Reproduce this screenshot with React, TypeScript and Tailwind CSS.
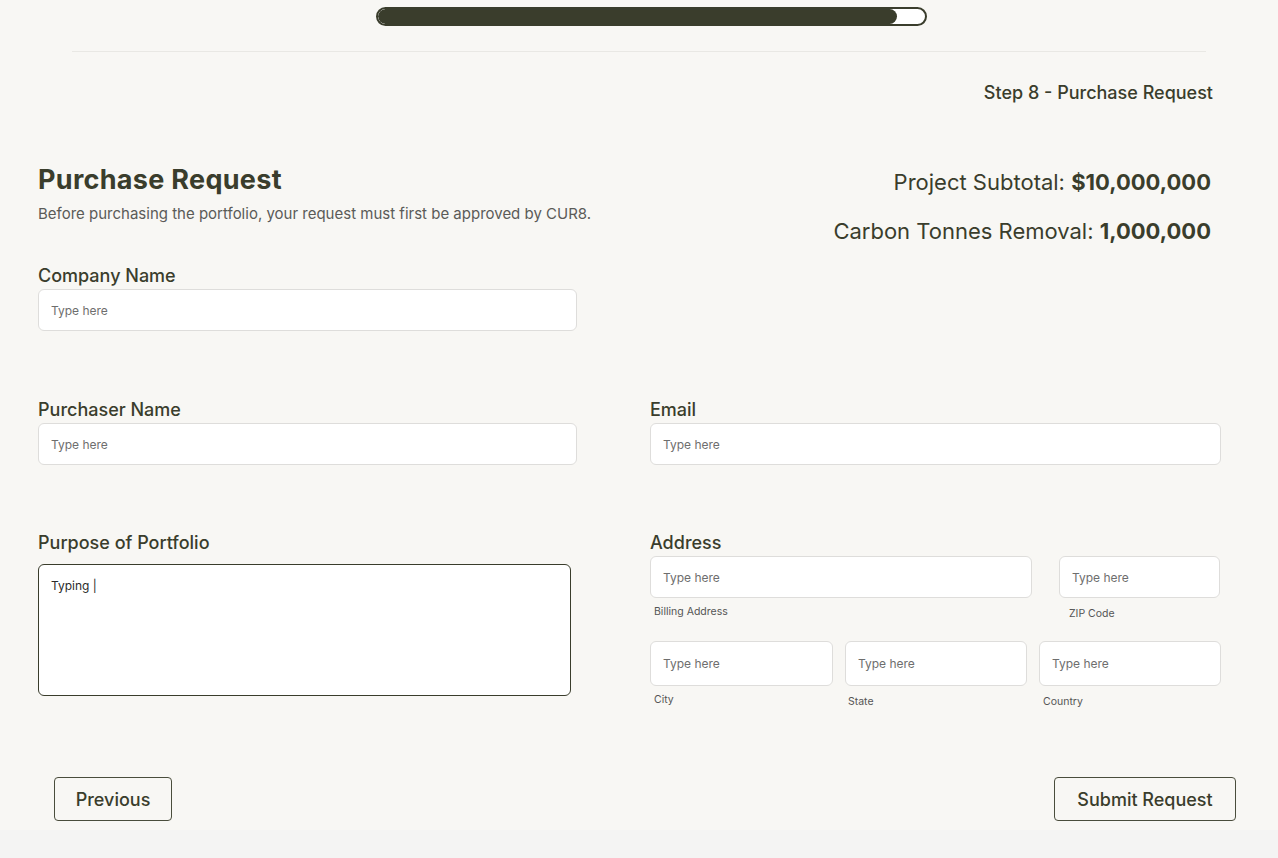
const ink = 'text-[#3a3d2c]';

function Field({ label, className = '' }: { label: string; className?: string }) {
  return (
    <div className={className}>
      <label className={`block text-[18px] font-medium leading-5 ${ink}`}>{label}</label>
      <input
        placeholder="Type here"
        className="mt-[3px] block h-[42px] w-full rounded-[6px] border border-[#dedddb] bg-white px-3 text-[12px] text-[#3a3d2c] placeholder:text-[#6e6e6e] outline-none"
      />
    </div>
  );
}

function SubInput({ caption, className = '', captionClass = '' }: { caption: string; className?: string; captionClass?: string }) {
  return (
    <div className={className}>
      <input
        placeholder="Type here"
        className="block h-full w-full rounded-[6px] border border-[#dedddb] bg-white px-3 text-[12px] placeholder:text-[#6e6e6e] outline-none"
      />
      <div className={`text-[10.5px] leading-4 text-[#555] ${captionClass}`}>{caption}</div>
    </div>
  );
}

export default function App() {
  return (
    <div className="min-h-screen bg-[#f4f4f3]" style={{ fontFamily: 'Inter, "Noto Sans", sans-serif' }}>
      <main className="h-[830px] bg-[#f8f7f4] pt-[7px]">
        {/* progress */}
        <div className="ml-[376px] h-[19px] w-[551px] overflow-hidden rounded-full border-2 border-[#3a3d2c] bg-white">
          <div className="h-full w-[519px] rounded-full bg-[#3a3d2c]" />
        </div>
        <div className="mx-[72px] mt-[25px] border-t border-[#e9e8e4]" />

        <div className={`mt-[29px] pr-[65px] text-right text-[18px] font-medium leading-6 ${ink}`}>
          Step 8 - Purchase Request
        </div>

        {/* header */}
        <div className="mt-[59px] flex items-start justify-between pl-[38px] pr-[67px]">
          <div>
            <h1 className={`text-[27px] font-bold leading-8 tracking-[0.3px] ${ink}`}>Purchase Request</h1>
            <p className="mt-[8px] text-[15px] leading-5 text-[#5b5b58]">
              Before purchasing the portfolio, your request must first be approved by CUR8.
            </p>
          </div>
          <div className={`mt-[4px] text-right text-[22px] leading-7 ${ink}`}>
            <div>
              Project Subtotal: <span className="font-bold">$10,000,000</span>
            </div>
            <div className="mt-[21px]">
              Carbon Tonnes Removal: <span className="font-bold">1,000,000</span>
            </div>
          </div>
        </div>

        {/* form */}
        <div className="mt-[21px] grid grid-cols-[539px_571px] gap-x-[73px] pl-[38px]">
          <Field label="Company Name" />
          <div />

          <Field label="Purchaser Name" className="mt-[69px]" />
          <Field label="Email" className="mt-[69px]" />

          <div className="mt-[68px]">
            <label className={`block text-[18px] font-medium leading-5 ${ink}`}>Purpose of Portfolio</label>
            <div className="mt-[11px] h-[132px] w-[533px] rounded-[6px] border-[1.5px] border-[#3a3d2c] bg-white px-3 pt-[12px] text-[12px] text-[#2b2b2b]">
              Typing |
            </div>
          </div>

          <div className="mt-[68px]">
            <label className={`block text-[18px] font-medium leading-5 ${ink}`}>Address</label>
            <div className="mt-[3px] flex gap-[27px]">
              <SubInput caption="Billing Address" className="h-[42px] w-[382px]" captionClass="mt-[6px] pl-1" />
              <SubInput caption="ZIP Code" className="h-[42px] w-[161px]" captionClass="mt-[8px] pl-[10px]" />
            </div>
            <div className="mt-[43px] flex gap-[12px]">
              <SubInput caption="City" className="h-[45px] w-[183px]" captionClass="mt-[6px] pl-1" />
              <SubInput caption="State" className="h-[45px] w-[182px]" captionClass="mt-[8px] pl-[3px]" />
              <SubInput caption="Country" className="h-[45px] w-[182px]" captionClass="mt-[8px] pl-[4px]" />
            </div>
          </div>
        </div>

        {/* actions */}
        <div className="mt-[81px] flex justify-between pl-[54px] pr-[42px]">
          <button className={`h-[44px] w-[118px] rounded-[4px] border-[1.5px] border-[#4a4d3c] text-[18px] font-medium ${ink}`}>
            Previous
          </button>
          <button className={`h-[44px] w-[182px] rounded-[4px] border-[1.5px] border-[#4a4d3c] text-[18px] font-medium ${ink}`}>
            Submit Request
          </button>
        </div>
      </main>
    </div>
  );
}
